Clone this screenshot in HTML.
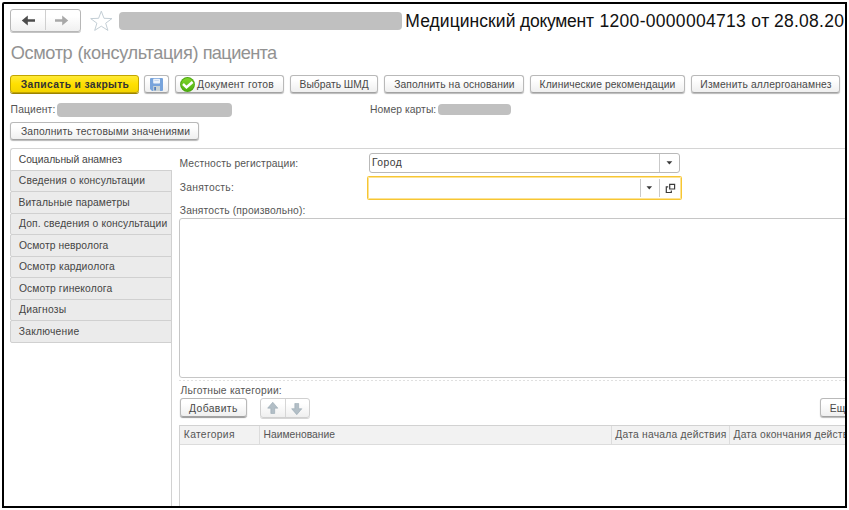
<!DOCTYPE html>
<html lang="ru">
<head>
<meta charset="utf-8">
<title>Осмотр (консультация) пациента</title>
<style>
*{box-sizing:border-box;margin:0;padding:0}
html,body{width:849px;height:510px;overflow:hidden;background:#fff}
body{font-family:"Liberation Sans",Arial,sans-serif;font-size:10.67px;color:#444;position:relative}
.abs{position:absolute}
#frame{position:absolute;left:2px;top:2px;width:845px;height:506px;border:2px solid #000;border-radius:2px 0 0 0;overflow:hidden;background:#fff}
#in{position:absolute;left:-4px;top:-4px;width:849px;height:510px}
.t{position:absolute;white-space:pre;display:block}
.grp{position:absolute;left:0;top:0;font-weight:normal;font-size:inherit}
.btn{position:absolute;height:18px;border:1px solid #b9b9b9;border-bottom-color:#a2a2a2;border-radius:3px;background:linear-gradient(#ffffff 25%,#efefef);box-shadow:0 1px 1px rgba(0,0,0,0.28)}
.gray{position:absolute;background:#c0c0c0;border-radius:4px}
.tab{position:absolute;left:10px;width:162px;height:22.5px;background:#ebebeb;border:1px solid #d0d0d0;border-radius:2px 0 0 2px}
.vl{position:absolute;width:1px;background:#d6d6d6}
</style>
</head>
<body>
<div id="frame"><div id="in">

<!-- navigation -->
<div class="abs" style="left:10px;top:9px;width:71px;height:22.5px;border:1px solid #b7b7b7;border-radius:3px;background:linear-gradient(#fff 30%,#f0f0f0);box-shadow:0 1px 0 #c4c4c4"></div>
<div class="vl" style="left:45px;top:10px;height:20px;background:#cfcfcf"></div>
<svg class="abs" style="left:21px;top:14.3px" width="15" height="13" viewBox="0 0 15 13"><path d="M0.8 6.5 L6.8 1.5 L6.8 5.3 L14 5.3 L14 7.7 L6.8 7.7 L6.8 11.5 Z" fill="#4c4c4c"/></svg>
<svg class="abs" style="left:54px;top:14.3px" width="15" height="13" viewBox="0 0 15 13"><path d="M14.2 6.5 L8.2 1.5 L8.2 5.3 L1 5.3 L1 7.7 L8.2 7.7 L8.2 11.5 Z" fill="#a8a8a8"/></svg>
<svg class="abs" style="left:89px;top:9px" width="25" height="23" viewBox="0 0 25 23"><path d="M12.3 2.2 L15.0 9.3 L22.9 9.6 L16.7 14.2 L18.9 21.4 L12.3 17.2 L5.7 21.4 L7.9 14.2 L1.7 9.6 L9.6 9.3 Z" fill="#fff" stroke="#bcc8d0" stroke-width="0.9"/></svg>
<div class="gray" style="left:119px;top:12px;width:283px;height:18px"></div>

<!-- command bar -->
<div class="btn" style="left:10px;top:75px;width:129px;background:linear-gradient(#ffea38,#ffe000 50%,#f4d400);border-color:#c2a500;box-shadow:0 1px 0 #9c8400"></div>
<div class="btn" style="left:144px;top:75px;width:25px"></div>
<svg class="abs" style="left:150px;top:78px" width="13" height="13" viewBox="0 0 13 13"><path d="M1 0 H12 Q13 0 13 1 V12 Q13 13 12 13 H2 L0 11 V1 Q0 0 1 0 Z" fill="#78a4dc"/><rect x="3.2" y="0.8" width="6.8" height="4.6" rx="0.6" fill="#eef4fc"/><rect x="4.4" y="2" width="4.4" height="1" fill="#c9d9ee"/><rect x="3.2" y="8" width="6.8" height="5" fill="#c9d3d6"/><rect x="4.3" y="9" width="1.6" height="3.4" fill="#4a78b8"/></svg>
<div class="btn" style="left:175px;top:75px;width:109px"></div>
<svg class="abs" style="left:180px;top:77.3px" width="15" height="15" viewBox="0 0 15 15"><defs><linearGradient id="gg" x1="0" y1="0" x2="0" y2="1"><stop offset="0" stop-color="#7fd62a"/><stop offset="1" stop-color="#4fb010"/></linearGradient></defs><circle cx="7.5" cy="7.5" r="7.4" fill="#4aa50e"/><circle cx="7.5" cy="7.5" r="6.5" fill="url(#gg)"/><path d="M3 7 L6.5 10.3 L12.6 5" fill="none" stroke="#fff" stroke-width="2.5"/></svg>
<div class="btn" style="left:289.5px;top:75px;width:88.5px"></div>
<div class="btn" style="left:384px;top:75px;width:140px"></div>
<div class="btn" style="left:530px;top:75px;width:155px"></div>
<div class="btn" style="left:691px;top:75px;width:149px"></div>

<div class="gray" style="left:57px;top:103px;width:175px;height:14px"></div>
<div class="gray" style="left:438px;top:103.5px;width:73px;height:11.5px"></div>

<div class="btn" style="left:10px;top:122px;width:189px"></div>

<!-- tab panel -->
<div class="abs" style="left:10px;top:148px;width:850px;height:23px;border-top:1px solid #d4d4d4;border-left:1px solid #d4d4d4;border-radius:3px 0 0 0"></div>
<div class="vl" style="left:171px;top:170px;height:345px;background:#d2d2d2"></div>
<div class="tab" style="top:169.5px"></div>
<div class="tab" style="top:191px"></div>
<div class="tab" style="top:212.5px"></div>
<div class="tab" style="top:234px"></div>
<div class="tab" style="top:255.5px"></div>
<div class="tab" style="top:277px"></div>
<div class="tab" style="top:298.5px"></div>
<div class="tab" style="top:320px"></div>

<!-- fields -->
<div class="abs" style="left:369px;top:152.6px;width:311px;height:20px;border:1px solid #b9b9b9;border-radius:3px;background:#fff"></div>
<div class="vl" style="left:659px;top:154px;height:18px;background:#c9c9c9"></div>
<svg class="abs" style="left:666px;top:160.5px" width="7" height="4" viewBox="0 0 7 4"><path d="M0.5 0.3 L6.3 0.3 L3.4 3.6 Z" fill="#3a3a3a"/></svg>

<div class="abs" style="left:367px;top:176px;width:315px;height:23.5px;border:1px solid #f7c633;border-radius:1.5px;background:#fff;box-shadow:inset 0 0 0 1px rgba(250,208,80,0.6)"></div>
<div class="vl" style="left:640px;top:179px;height:18px;background:#c9c9c9"></div>
<div class="vl" style="left:659px;top:179px;height:18px;background:#c9c9c9"></div>
<svg class="abs" style="left:646.3px;top:185.8px" width="7" height="4" viewBox="0 0 7 4"><path d="M0.5 0.3 L6.1 0.3 L3.3 3.5 Z" fill="#3a3a3a"/></svg>
<svg class="abs" style="left:664.5px;top:182.5px" width="11" height="11" viewBox="0 0 11 11"><path d="M4.7 1.4 H9.6 V6 H4.7 Z" fill="none" stroke="#3a3a3a" stroke-width="1.2"/><path d="M3.2 3.9 H1.3 V9.5 H6.3 V7.6" fill="none" stroke="#3a3a3a" stroke-width="1.2"/></svg>

<div class="abs" style="left:179px;top:218px;width:690px;height:160px;border:1px solid #c6c6c6;border-radius:3px;background:#fff"></div>
<div class="abs" style="left:179px;top:380px;width:690px;height:1px;background:repeating-linear-gradient(90deg,#e0e0e0 0,#e0e0e0 2px,transparent 2px,transparent 4px)"></div>

<div class="btn" style="left:179.5px;top:398px;width:67.5px;height:19px;box-shadow:0 1px 1px rgba(0,0,0,0.4)"></div>
<div class="btn" style="left:260px;top:398px;width:50px;height:19.5px;border-color:#d0d0d0;box-shadow:0 1px 0 #d6d6d6"></div>
<div class="vl" style="left:285px;top:399px;height:18px;background:#d6d6d6"></div>
<svg class="abs" style="left:267.2px;top:402.1px" width="11.5" height="12.3" preserveAspectRatio="none" viewBox="0 0 12 12"><path d="M6 0.2 L11.3 6 L8 6 L8 11.2 L4 11.2 L4 6 L0.7 6 Z" fill="#b2bec6" stroke="#97a7b1" stroke-width="0.6"/></svg>
<svg class="abs" style="left:291.2px;top:402.5px" width="11.5" height="12.3" preserveAspectRatio="none" viewBox="0 0 12 12"><path d="M6 11.4 L11.3 5.6 L8 5.6 L8 0.4 L4 0.4 L4 5.6 L0.7 5.6 Z" fill="#b2bec6" stroke="#97a7b1" stroke-width="0.6"/></svg>
<div class="btn" style="left:820px;top:398px;width:60px;height:19px"></div>

<!-- table -->
<div class="abs" style="left:179px;top:425px;width:690px;height:100px;border:1px solid #d2d2d2;background:#fff"></div>
<div class="abs" style="left:180px;top:426px;width:690px;height:19px;background:#f2f2f2;border-bottom:1px solid #dcdcdc"></div>
<div class="vl" style="left:259px;top:426px;height:19px;background:#dcdcdc"></div>
<div class="vl" style="left:611px;top:426px;height:19px;background:#dcdcdc"></div>
<div class="vl" style="left:729px;top:426px;height:19px;background:#dcdcdc"></div>

<h1 class="grp"><span class="t" style="left:405.33px;top:10.04px;font-size:17.5px;line-height:23px;color:#111;letter-spacing:0.059px;">Медицинский</span> <span class="t" style="left:520.05px;top:10.04px;font-size:17.5px;line-height:23px;color:#111;letter-spacing:-0.262px;">документ</span> <span class="t" style="left:599.52px;top:10.04px;font-size:17.5px;line-height:23px;color:#111;letter-spacing:0.300px;">1200-0000004713</span> <span class="t" style="left:751.36px;top:10.04px;font-size:17.5px;line-height:23px;color:#111;letter-spacing:0.509px;">от</span> <span class="t" style="left:773.89px;top:10.04px;font-size:17.5px;line-height:23px;color:#111;letter-spacing:0.278px;">28.08.20</span></h1>
<h2 class="grp"><span class="t" style="left:10.66px;top:40.69px;font-size:18.2px;line-height:24px;color:#929292;letter-spacing:-0.371px;">Осмотр</span> <span class="t" style="left:77.41px;top:40.69px;font-size:18.2px;line-height:24px;color:#929292;letter-spacing:-0.347px;">(консультация)</span> <span class="t" style="left:202.67px;top:40.69px;font-size:18.2px;line-height:24px;color:#929292;letter-spacing:-0.630px;">пациента</span></h2>
<div class="t" style="left:20.82px;top:77.93px;font-size:10.3px;line-height:13px;color:#333;font-weight:bold;letter-spacing:0.356px;">Записать и закрыть</div>
<div class="t" style="left:197.10px;top:77.93px;font-size:10.3px;line-height:13px;color:#484848;letter-spacing:0.250px;">Документ готов</div>
<div class="t" style="left:299.61px;top:77.93px;font-size:10.3px;line-height:13px;color:#484848;letter-spacing:-0.013px;">Выбрать ШМД</div>
<div class="t" style="left:394.20px;top:77.93px;font-size:10.3px;line-height:13px;color:#484848;letter-spacing:0.102px;">Заполнить на основании</div>
<div class="t" style="left:539.62px;top:77.93px;font-size:10.3px;line-height:13px;color:#484848;letter-spacing:0.089px;">Клинические рекомендации</div>
<div class="t" style="left:700.37px;top:77.93px;font-size:10.3px;line-height:13px;color:#484848;letter-spacing:0.144px;">Изменить аллергоанамнез</div>
<div class="t" style="left:10.62px;top:102.53px;font-size:10.3px;line-height:13px;color:#555;letter-spacing:0.134px;">Пациент:</div>
<div class="t" style="left:370.01px;top:102.53px;font-size:10.3px;line-height:13px;color:#555;letter-spacing:0.066px;">Номер карты:</div>
<div class="t" style="left:20.95px;top:125.43px;font-size:10.3px;line-height:13px;color:#484848;letter-spacing:0.155px;">Заполнить тестовыми значениями</div>
<div class="t" style="left:18.75px;top:152.93px;font-size:10.3px;line-height:13px;color:#454545;letter-spacing:-0.031px;">Социальный анамнез</div>
<div class="t" style="left:18.85px;top:174.23px;font-size:10.3px;line-height:13px;color:#454545;letter-spacing:0.143px;">Сведения о консультации</div>
<div class="t" style="left:18.51px;top:195.73px;font-size:10.3px;line-height:13px;color:#454545;letter-spacing:0.115px;">Витальные параметры</div>
<div class="t" style="left:19.00px;top:217.23px;font-size:10.3px;line-height:13px;color:#454545;letter-spacing:0.129px;">Доп. сведения о консультации</div>
<div class="t" style="left:18.89px;top:238.73px;font-size:10.3px;line-height:13px;color:#454545;letter-spacing:0.076px;">Осмотр невролога</div>
<div class="t" style="left:18.89px;top:260.23px;font-size:10.3px;line-height:13px;color:#454545;letter-spacing:0.156px;">Осмотр кардиолога</div>
<div class="t" style="left:18.89px;top:281.73px;font-size:10.3px;line-height:13px;color:#454545;letter-spacing:0.134px;">Осмотр гинеколога</div>
<div class="t" style="left:19.00px;top:303.23px;font-size:10.3px;line-height:13px;color:#454545;letter-spacing:0.202px;">Диагнозы</div>
<div class="t" style="left:18.85px;top:324.73px;font-size:10.3px;line-height:13px;color:#454545;letter-spacing:0.222px;">Заключение</div>
<div class="t" style="left:179.52px;top:156.53px;font-size:10.3px;line-height:13px;color:#555;letter-spacing:0.111px;">Местность регистрации:</div>
<div class="t" style="left:371.92px;top:155.73px;font-size:10.3px;line-height:13px;color:#3a3a3a;letter-spacing:0.510px;">Город</div>
<div class="t" style="left:179.85px;top:181.43px;font-size:10.3px;line-height:13px;color:#555;letter-spacing:0.260px;">Занятость:</div>
<div class="t" style="left:179.85px;top:203.73px;font-size:10.3px;line-height:13px;color:#555;letter-spacing:0.130px;">Занятость (произвольно):</div>
<div class="t" style="left:180.43px;top:383.63px;font-size:10.3px;line-height:13px;color:#555;letter-spacing:0.213px;">Льготные категории:</div>
<div class="t" style="left:189.10px;top:401.73px;font-size:10.3px;line-height:13px;color:#484848;letter-spacing:0.388px;">Добавить</div>
<div class="t" style="left:829.81px;top:401.73px;font-size:10.3px;line-height:13px;color:#484848;letter-spacing:0.000px;">Еще</div>
<div class="t" style="left:183.82px;top:428.23px;font-size:10.3px;line-height:13px;color:#555;letter-spacing:0.318px;">Категория</div>
<div class="t" style="left:263.51px;top:428.23px;font-size:10.3px;line-height:13px;color:#555;letter-spacing:0.003px;">Наименование</div>
<div class="t" style="left:615.30px;top:428.23px;font-size:10.3px;line-height:13px;color:#555;letter-spacing:0.223px;">Дата начала действия</div>
<div class="t" style="left:733.50px;top:428.23px;font-size:10.3px;line-height:13px;color:#555;letter-spacing:0.172px;">Дата окончания действия</div>

</div></div>
</body>
</html>
